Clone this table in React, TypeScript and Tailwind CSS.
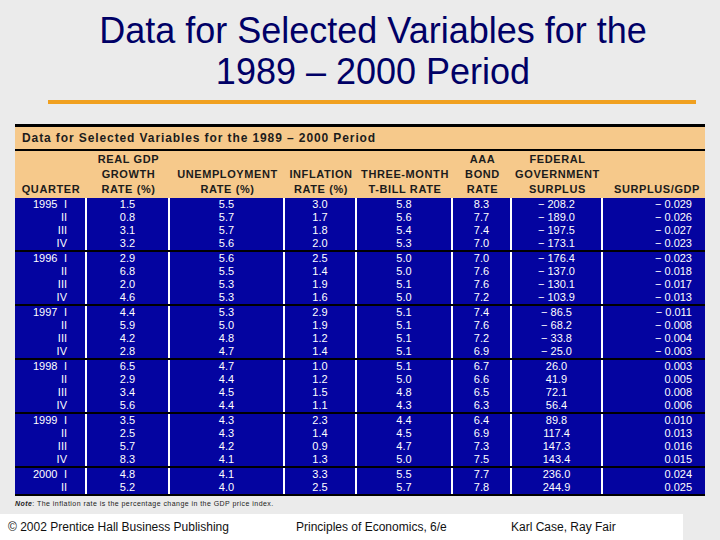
import React from "react";

interface Row {
  year?: string;
  q: string;
  gdp: string;
  unemp: string;
  infl: string;
  tbill: string;
  aaa: string;
  surplus: string;
  ratio: string;
}

const M = "\u2212 ";

const groups: Row[][] = [
  [
    { year: "1995", q: "I", gdp: "1.5", unemp: "5.5", infl: "3.0", tbill: "5.8", aaa: "8.3", surplus: M + "208.2", ratio: M + "0.029" },
    { q: "II", gdp: "0.8", unemp: "5.7", infl: "1.7", tbill: "5.6", aaa: "7.7", surplus: M + "189.0", ratio: M + "0.026" },
    { q: "III", gdp: "3.1", unemp: "5.7", infl: "1.8", tbill: "5.4", aaa: "7.4", surplus: M + "197.5", ratio: M + "0.027" },
    { q: "IV", gdp: "3.2", unemp: "5.6", infl: "2.0", tbill: "5.3", aaa: "7.0", surplus: M + "173.1", ratio: M + "0.023" },
  ],
  [
    { year: "1996", q: "I", gdp: "2.9", unemp: "5.6", infl: "2.5", tbill: "5.0", aaa: "7.0", surplus: M + "176.4", ratio: M + "0.023" },
    { q: "II", gdp: "6.8", unemp: "5.5", infl: "1.4", tbill: "5.0", aaa: "7.6", surplus: M + "137.0", ratio: M + "0.018" },
    { q: "III", gdp: "2.0", unemp: "5.3", infl: "1.9", tbill: "5.1", aaa: "7.6", surplus: M + "130.1", ratio: M + "0.017" },
    { q: "IV", gdp: "4.6", unemp: "5.3", infl: "1.6", tbill: "5.0", aaa: "7.2", surplus: M + "103.9", ratio: M + "0.013" },
  ],
  [
    { year: "1997", q: "I", gdp: "4.4", unemp: "5.3", infl: "2.9", tbill: "5.1", aaa: "7.4", surplus: M + "86.5", ratio: M + "0.011" },
    { q: "II", gdp: "5.9", unemp: "5.0", infl: "1.9", tbill: "5.1", aaa: "7.6", surplus: M + "68.2", ratio: M + "0.008" },
    { q: "III", gdp: "4.2", unemp: "4.8", infl: "1.2", tbill: "5.1", aaa: "7.2", surplus: M + "33.8", ratio: M + "0.004" },
    { q: "IV", gdp: "2.8", unemp: "4.7", infl: "1.4", tbill: "5.1", aaa: "6.9", surplus: M + "25.0", ratio: M + "0.003" },
  ],
  [
    { year: "1998", q: "I", gdp: "6.5", unemp: "4.7", infl: "1.0", tbill: "5.1", aaa: "6.7", surplus: "26.0", ratio: "0.003" },
    { q: "II", gdp: "2.9", unemp: "4.4", infl: "1.2", tbill: "5.0", aaa: "6.6", surplus: "41.9", ratio: "0.005" },
    { q: "III", gdp: "3.4", unemp: "4.5", infl: "1.5", tbill: "4.8", aaa: "6.5", surplus: "72.1", ratio: "0.008" },
    { q: "IV", gdp: "5.6", unemp: "4.4", infl: "1.1", tbill: "4.3", aaa: "6.3", surplus: "56.4", ratio: "0.006" },
  ],
  [
    { year: "1999", q: "I", gdp: "3.5", unemp: "4.3", infl: "2.3", tbill: "4.4", aaa: "6.4", surplus: "89.8", ratio: "0.010" },
    { q: "II", gdp: "2.5", unemp: "4.3", infl: "1.4", tbill: "4.5", aaa: "6.9", surplus: "117.4", ratio: "0.013" },
    { q: "III", gdp: "5.7", unemp: "4.2", infl: "0.9", tbill: "4.7", aaa: "7.3", surplus: "147.3", ratio: "0.016" },
    { q: "IV", gdp: "8.3", unemp: "4.1", infl: "1.3", tbill: "5.0", aaa: "7.5", surplus: "143.4", ratio: "0.015" },
  ],
  [
    { year: "2000", q: "I", gdp: "4.8", unemp: "4.1", infl: "3.3", tbill: "5.5", aaa: "7.7", surplus: "236.0", ratio: "0.024" },
    { q: "II", gdp: "5.2", unemp: "4.0", infl: "2.5", tbill: "5.7", aaa: "7.8", surplus: "244.9", ratio: "0.025" },
  ],
];

const cols = "grid grid-cols-[72px_83px_115px_72px_96px_59px_91px_102px]";

const Header = () => (
  <div
    className={`${cols} h-[47px] items-end pb-[1px] bg-[#f6c98b] text-[#1c1c1c] text-[11px] font-bold leading-[15px] tracking-[0.6px] text-center`}
  >
    <div>QUARTER</div>
    <div>
      REAL GDP
      <br />
      GROWTH
      <br />
      RATE (%)
    </div>
    <div>
      UNEMPLOYMENT
      <br />
      RATE (%)
    </div>
    <div>
      INFLATION
      <br />
      RATE (%)
    </div>
    <div>
      THREE-MONTH
      <br />
      T-BILL RATE
    </div>
    <div>
      AAA
      <br />
      BOND
      <br />
      RATE
    </div>
    <div>
      FEDERAL
      <br />
      GOVERNMENT
      <br />
      SURPLUS
    </div>
    <div className="pl-[6px]">SURPLUS/GDP</div>
  </div>
);

const Group = ({ rows, first }: { rows: Row[]; first: boolean }) => {
  const cell = "flex flex-col border-r-2 border-white";
  const line = "h-[13px] leading-[13px] whitespace-pre";
  return (
    <div className={`${cols} ${first ? "" : "border-t-2 border-black"}`}>
      <div className={`${cell} pl-[18px] pr-[18px]`}>
        {rows.map((r, i) => (
          <div key={i} className={`${line} flex justify-between`}>
            <span>{r.year ?? ""}</span>
            <span>{r.q}</span>
          </div>
        ))}
      </div>
      <div className={`${cell} text-center`}>
        {rows.map((r, i) => (
          <div key={i} className={line}>{r.gdp}</div>
        ))}
      </div>
      <div className={`${cell} text-center`}>
        {rows.map((r, i) => (
          <div key={i} className={line}>{r.unemp}</div>
        ))}
      </div>
      <div className={`${cell} text-center`}>
        {rows.map((r, i) => (
          <div key={i} className={line}>{r.infl}</div>
        ))}
      </div>
      <div className={`${cell} text-center`}>
        {rows.map((r, i) => (
          <div key={i} className={line}>{r.tbill}</div>
        ))}
      </div>
      <div className={`${cell} text-center`}>
        {rows.map((r, i) => (
          <div key={i} className={line}>{r.aaa}</div>
        ))}
      </div>
      <div className={`${cell} text-center`}>
        {rows.map((r, i) => (
          <div key={i} className={line}>{r.surplus}</div>
        ))}
      </div>
      <div className="flex flex-col text-right pr-[13px]">
        {rows.map((r, i) => (
          <div key={i} className={line}>{r.ratio}</div>
        ))}
      </div>
    </div>
  );
};

export default function App() {
  return (
    <div className="w-[720px] h-[540px] overflow-hidden flex flex-col bg-[#ebebeb] font-['Liberation_Sans',Arial,sans-serif]">
      {/* Slide title */}
      <div className="pt-[10px] pl-[26px] text-center text-[36px] leading-[41px] text-[#000066]">
        Data for Selected Variables for the
        <br />
        1989 – 2000 Period
      </div>
      <div className="mt-[8px] ml-[48px] w-[648px] h-[4px] bg-[#f0a020]" />

      {/* Table */}
      <div className="mt-[20px] ml-[15px] w-[690px] border-t-[3px] border-b-2 border-black">
        <div className="h-[22px] flex items-center pl-[7px] bg-[#f6c98b] text-[12px] font-bold tracking-[0.9px] text-[#1c1c1c]">
          Data for Selected Variables for the 1989 – 2000 Period
        </div>
        <div className="h-[2px] bg-black" />
        <Header />
        <div className="bg-[#0404a0] text-white text-[11px]">
          {groups.map((g, i) => (
            <Group key={i} rows={g} first={i === 0} />
          ))}
        </div>
      </div>

      <div className="mt-[2px] ml-[15px] text-[7px] leading-[12px] tracking-[0.45px] text-[#222]">
        <span className="italic font-bold">Note</span>: The inflation rate is the percentage change in the GDP price index.
      </div>

      {/* Footer */}
      <div className="mt-auto h-[26px] w-[683px] bg-white flex items-center pl-[8px] text-[12px] text-[#111]">
        <span className="w-[288px]">© 2002 Prentice Hall Business Publishing</span>
        <span className="w-[215px]">Principles of Economics, 6/e</span>
        <span>Karl Case, Ray Fair</span>
      </div>
    </div>
  );
}
